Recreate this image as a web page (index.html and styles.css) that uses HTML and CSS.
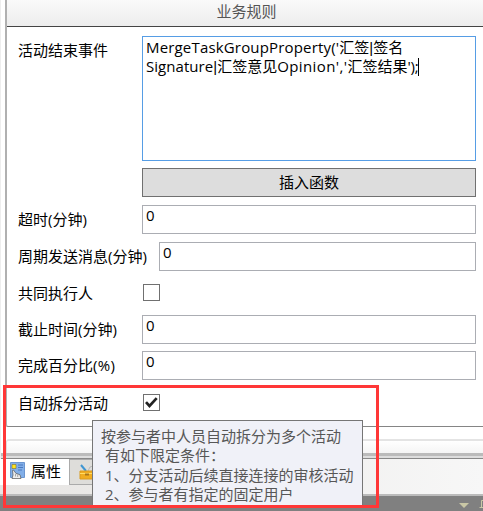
FILE: index.html
```html
<!DOCTYPE html>
<html lang="zh-CN">
<head>
<meta charset="utf-8">
<title>业务规则</title>
<link rel="stylesheet" href="styles.css">
</head>
<body>
<div class="window">
  <section class="panel">
    <header class="panel-title">业务规则</header>
    <div class="form">
      <div class="row row-event"><label>活动结束事件</label><div class="editor"><div><span class="code-a">MergeTaskGroupProperty('</span>汇签<span class="bar">|</span>签名</div><div><span class="code-b">Signature</span><span class="bar">|</span>汇签意见<span class="code-c">Opinion','</span>汇签结果<span class="code-d">');</span><i class="caret"></i></div></div></div>
      <div class="row row-button"><span></span><button>插入函数</button></div>
      <div class="row row-timeout"><label>超时(分钟)</label><div class="field">0</div></div>
      <div class="row row-period"><label>周期发送消息(分钟)</label><div class="field">0</div></div>
      <div class="row row-shared"><label>共同执行人</label><span class="check"></span></div>
      <div class="row row-deadline"><label>截止时间(分钟)</label><div class="field">0</div></div>
      <div class="row row-percent"><label>完成百分比<span class="percent">(%)</span></label><div class="field">0</div></div>
      <div class="row row-split"><label>自动拆分活动</label><span class="check"><svg width="15" height="15" viewBox="0 0 15 15"><path d="M2 7.2 5.5 11 12.7 3.2" fill="none" stroke="#222" stroke-width="2.7"/></svg></span></div>
    </div>
  </section>
  <div class="next-panel"></div>
  <div class="divider"></div>
  <nav class="tabs">
    <div class="tab active">
      <svg width="16" height="18" viewBox="0 0 16 18"><path d="M.5.5h14v15H.5z" fill="#82afe8" stroke="#6c96d0"/><path d="M2 2.5h4v4H2z" fill="#ffe51e" stroke="#806f32" stroke-width=".6"/><path d="M8 3h5M8 5.5h5M8 8h4" stroke="#4a78c0"/><path d="M2 16.5 3 13 2.500 8.500l1.200-.3L6 11.500l2 .5 2 .8 1 3.700z" fill="#eee" stroke="#555" stroke-width=".7"/><path d="M5.500 12v2.500M7.700 12.500V15" stroke="#777" stroke-width=".6"/></svg>
      <span>属性</span>
    </div>
    <div class="tab inactive">
      <svg width="18" height="18" viewBox="0 0 18 18"><path d="m2 1 5 6" stroke="#3f96d2" stroke-width="2"/><path d="m9 7 2-4 3-1v3l-2 3" fill="#ddd" stroke="#aaa" stroke-width=".7"/><path d="M1 7h15v8H1z" fill="#f1ad20" stroke="#d99a1e"/><path d="M1 9.500h15" stroke="#ffdc65"/><path d="M6 9.500h4v2H6z" fill="#a87519"/></svg>
    </div>
  </nav>
  <footer class="dock"><svg width="40" height="16" viewBox="0 0 40 16"><path d="M16 7h10l-5 5z" fill="#c9c7a5"/><path d="M40 4.500h-1.500v7M36.500 11.500H40" fill="none" stroke="#c9c7a5"/></svg></footer>
</div>
<div class="tooltip"><div>按参与者中人员自动拆分为多个活动</div><div class="item">有如下限定条件：</div><div class="item"><span class="num">1</span>、分支活动后续直接连接的审核活动</div><div class="item"><span class="num">2</span>、参与者有指定的固定用户</div></div>
<div class="highlight"></div>
</body>
</html>
```
FILE: styles.css
```css
* { box-sizing: border-box; }
body { margin: 0; background: #fff; color: #000; font: 15px/19px "Open Sans", "Noto Sans CJK SC", sans-serif; overflow: hidden; }
.window { width: 483px; height: 511px; display: flex; flex-direction: column; border-left: 1px solid #eee; }
.panel { flex: 0 0 427px; margin-left: 4px; border-left: 2px solid #b0b0b0; border-bottom: 1px solid #858585; border-bottom-left-radius: 3px; }
.panel-title { height: 27px; padding: 2px 0 0 3px; text-align: center; color: #555; background: linear-gradient(#fafafa, #ededed); border-bottom: 1px solid #444; }
.form { padding: 9px 7px 0 11px; }
.row { display: flex; align-items: flex-start; white-space: nowrap; }
.row label, .row > span:first-child { flex: 0 0 124px; padding-top: 5px; }
.row-event { height: 132px; }
.editor { flex: 1; height: 125px; padding: 1px 3px; border: 1px solid #569de5; }
.editor > div { height: 19px; }
.code-a { letter-spacing: .17px; }
.code-b { letter-spacing: .05px; }
.bar { font-family: "Liberation Sans", sans-serif; }
.code-c { letter-spacing: .4px; }
.code-d { letter-spacing: -.2px; }
.caret { display: inline-block; width: 1px; height: 18px; margin-left: -1px; vertical-align: -4px; background: #000; }
.row-button { height: 37px; }
button { flex: 1; height: 29px; padding: 0; font: inherit; color: #000; background: #ddd; border: 1px solid #707070; }
.field { flex: 1; height: 29px; padding: 0 3px; border: 1px solid #abadb3; }
.row-timeout { height: 37px; }
.row-period { height: 42px; }
.row-period label { flex-basis: 141px; }
.row-shared { height: 31px; }
.row-shared label, .row-split label { padding-top: 0; }
.check { width: 17px; height: 17px; margin-left: 1px; border: 1px solid #707070; }
.check svg { display: block; }
.row-deadline { height: 36px; }
.row-percent { height: 43px; }
.percent { letter-spacing: .3px; }
.next-panel { flex: 0 0 14px; margin: 12px 0 0 5px; background: linear-gradient(#fff, #f5f5f5); border-top: 2px solid #e4e4e4; border-left: 1px solid #ddd; border-top-left-radius: 3px; }
.divider { flex: 0 0 6px; border-top: 3px solid #bbb; border-bottom: 1px solid #888; background: #ddd; }
.tabs { flex: 0 0 37px; display: flex; background: linear-gradient(90deg, #e7e5e3, #f7f7f7); border-bottom: 2px solid #bbb; margin-left: -1px; }
.tab { display: flex; height: 26px; }
.active { width: 69px; padding: 3px 0 0 10px; background: #fff; gap: 5px; }
.inactive { width: 60px; padding: 4px 9px; border: 1px solid #aaa; background: #deddda; }
.dock { flex: 1; margin-left: -1px; text-align: right; background: #808080; }
.tooltip { position: absolute; left: 92px; top: 420px; width: 271px; height: 87px; padding: 6px 7px 0 8px; border: 1px solid #767676; background: #f0f1f8; color: #575757; white-space: nowrap; line-height: 19.4px; }
.item { padding-left: 4px; }
.highlight { position: absolute; left: 3px; top: 385px; width: 376px; height: 123px; border: 3px solid #ff3737; }
```
